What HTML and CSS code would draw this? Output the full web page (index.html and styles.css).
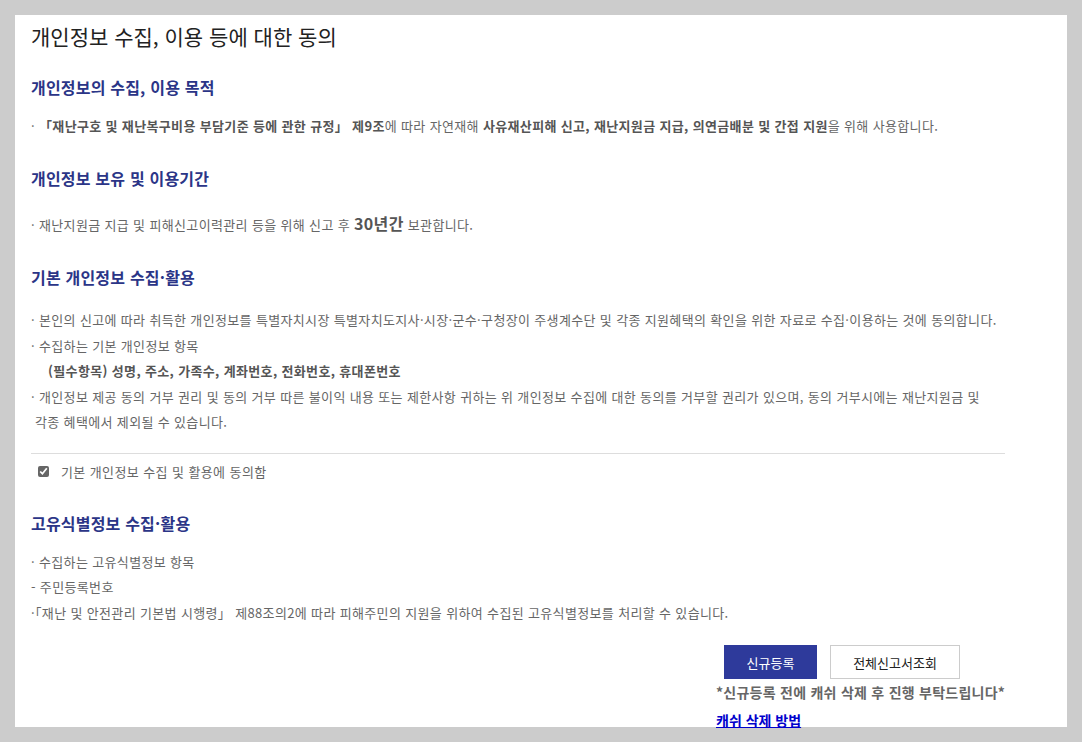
FILE: index.html
```html
<!DOCTYPE html>
<html lang="ko">
<head>
    <meta charset="UTF-8">
    <meta name="viewport" content="width=device-width, initial-scale=1.0">
    <title>개인정보 수집, 이용 등에 대한 동의</title>
    <link rel="stylesheet" href="styles.css">
</head>
<body>
    <div class="panel">
        <h1 class="title">개인정보 수집, 이용 등에 대한 동의</h1>

        <h3 class="sec-title sec-first">개인정보의 수집, 이용 목적</h3>
        <ul class="list list-purpose">
            <li>· <b>「재난구호 및 재난복구비용 부담기준 등에 관한 규정」 제9조</b>에 따라 자연재해 <b>사유재산피해 신고, 재난지원금 지급, 의연금배분 및 간접 지원</b>을 위해 사용합니다.</li>
        </ul>

        <h3 class="sec-title">개인정보 보유 및 이용기간</h3>
        <ul class="list list-period">
            <li>· 재난지원금 지급 및 피해신고이력관리 등을 위해 신고 후 <b class="big">30년간</b> 보관합니다.</li>
        </ul>

        <h3 class="sec-title">기본 개인정보 수집·활용</h3>
        <ul class="list">
            <li>· 본인의 신고에 따라 취득한 개인정보를 특별자치시장 특별자치도지사·시장·군수·구청장이 주생계수단 및 각종 지원혜택의 확인을 위한 자료로 수집·이용하는 것에 동의합니다.</li>
            <li>· 수집하는 기본 개인정보 항목</li>
            <li class="sub"><b>(필수항목) 성명, 주소, 가족수, 계좌번호, 전화번호, 휴대폰번호</b></li>
            <li>· 개인정보 제공 동의 거부 권리 및 동의 거부 따른 불이익 내용 또는 제한사항 귀하는 위 개인정보 수집에 대한 동의를 거부할 권리가 있으며, 동의 거부시에는 재난지원금 및<br>&nbsp;각종 혜택에서 제외될 수 있습니다.</li>
        </ul>

        <div class="agree">
            <label><input type="checkbox" checked> 기본 개인정보 수집 및 활용에 동의함</label>
        </div>

        <h3 class="sec-title sec-after-agree">고유식별정보 수집·활용</h3>
        <ul class="list list-tight">
            <li>· 수집하는 고유식별정보 항목</li>
            <li>- 주민등록번호</li>
            <li>·「재난 및 안전관리 기본법 시행령」 제88조의2에 따라 피해주민의 지원을 위하여 수집된 고유식별정보를 처리할 수 있습니다.</li>
        </ul>

        <div class="actions">
            <div class="btn-row">
                <button class="btn btn-primary">신규등록</button>
                <button class="btn btn-line">전체신고서조회</button>
            </div>
            <p class="notice">*신규등록 전에 캐쉬 삭제 후 진행 부탁드립니다*</p>
            <a class="cache-link" href="#">캐쉬 삭제 방법</a>
        </div>
    </div>
</body>
</html>
```

FILE: styles.css
```css
html, body {
    margin: 0;
    padding: 0;
}

body {
    background-color: #cccccc;
    padding: 15px;
    font-family: 'Noto Sans CJK KR', 'Noto Sans', sans-serif;
    color: #666;
    box-sizing: border-box;
    height: 100vh;
}

.panel {
    background-color: #fff;
    height: calc(100vh - 30px);
    box-sizing: border-box;
    padding: 9px 62px 0 16px;
}

.title {
    margin: 0;
    font-size: 21px;
    line-height: 24px;
    font-weight: normal;
    color: #222;
}

.sec-title {
    margin: 30px 0 0;
    font-size: 16px;
    line-height: 20px;
    font-weight: bold;
    color: #2b3587;
    letter-spacing: 0.2px;
}

.sec-first {
    margin-top: 29px;
}

.sec-after-agree {
    margin-top: 29px;
}

.list {
    list-style: none;
    margin: 20px 0 0;
    padding: 0;
    font-size: 13px;
    line-height: 25.5px;
    letter-spacing: 0.35px;
    white-space: nowrap;
}

.list-tight {
    margin-top: 16px;
}

.list-purpose {
    margin-top: 17px;
    line-height: 24px;
}

.list-period {
    margin-top: 23px;
    line-height: 24px;
}

.list b {
    color: #555;
}

.list .big {
    font-size: 16px;
}

.list .sub {
    padding-left: 17px;
}

.agree {
    border-top: 1px solid #ddd;
    margin-top: 18px;
    padding-top: 6px;
    font-size: 13px;
    line-height: 24px;
    letter-spacing: 0.4px;
}

.agree label {
    display: flex;
    align-items: center;
    gap: 12px;
    padding-left: 7px;
}

.agree input {
    margin: 0;
    width: 11px;
    height: 11px;
    accent-color: #666;
}

.actions {
    width: 289px;
    margin: 20px 0 0 auto;
}

.btn-row {
    display: flex;
    gap: 13px;
    padding-left: 8px;
}

.btn {
    height: 34px;
    font-family: inherit;
    font-size: 13px;
    cursor: pointer;
}

.btn-primary {
    width: 93px;
    background-color: #2e3a9b;
    color: #fff;
    border: none;
}

.btn-line {
    width: 130px;
    background-color: #fff;
    color: #222;
    border: 1px solid #ccc;
}

.notice {
    margin: 3px 0 0;
    font-size: 14px;
    line-height: 20px;
    font-weight: bold;
    color: #666;
    letter-spacing: 0.25px;
    white-space: nowrap;
}

.cache-link {
    display: inline-block;
    margin-top: 8px;
    font-size: 14px;
    line-height: 20px;
    font-weight: bold;
    color: #0000cc;
}
```
